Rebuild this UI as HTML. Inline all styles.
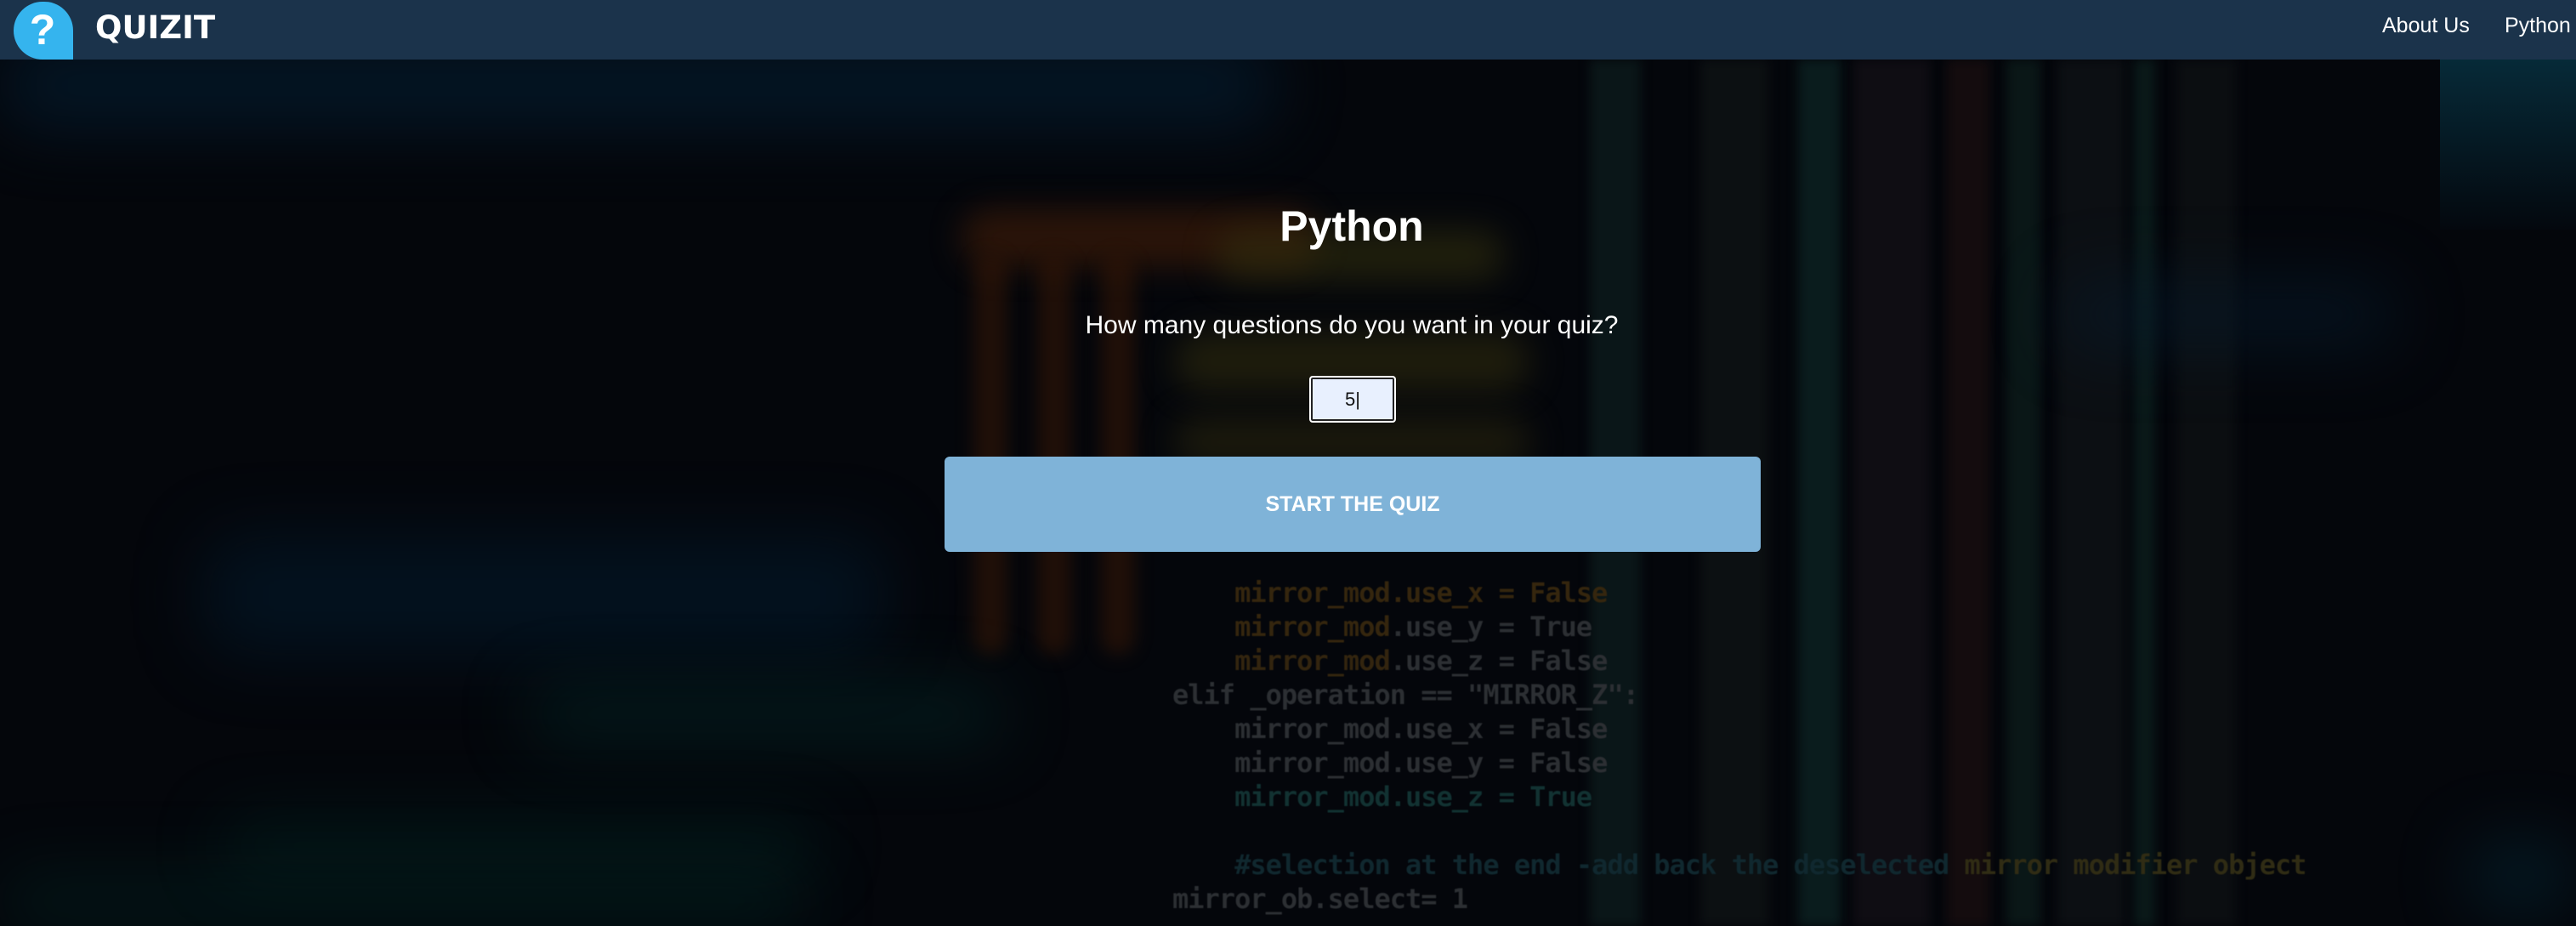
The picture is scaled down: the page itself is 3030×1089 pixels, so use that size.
<!DOCTYPE html>
<html><head><meta charset="utf-8"><style>
*{margin:0;padding:0;box-sizing:border-box}
html,body{width:3030px;height:1089px;overflow:hidden;background:#03050a;font-family:"Liberation Sans",Arial,sans-serif}
.bg{position:absolute;left:0;top:70px;width:3030px;height:1019px;overflow:hidden;background:#04060b}
.b{position:absolute;filter:blur(40px);border-radius:40px}
.s{position:absolute;top:0;height:1019px;filter:blur(6px)}
nav{position:absolute;left:0;top:0;width:3030px;height:70px;background:#1b334b;z-index:5}
.logo{position:absolute;left:14px;top:0}
.brand{position:absolute;left:112px;top:11px;color:#fff;font-weight:bold;font-size:37px;letter-spacing:0;font-family:"DejaVu Sans","Liberation Sans",sans-serif}
.nl{position:absolute;top:16px;color:#fff;font-size:25px}
.code{position:absolute;font-family:"DejaVu Sans Mono","Liberation Mono",monospace;font-size:32px;font-weight:bold;color:#2c2f33;white-space:pre;line-height:40px;letter-spacing:-1px;filter:blur(0.6px)}
h1{position:absolute;left:0;width:3180px;top:237px;text-align:center;color:#fff;font-size:50px;font-weight:bold}
.q{position:absolute;left:0;width:3180px;top:366px;text-align:center;color:#fff;font-size:30px}
.inp{position:absolute;left:1540px;top:442px;width:102px;height:55px;background:#e8f0fe;border:2px solid #fff;box-shadow:inset 0 0 0 2px #222;border-radius:4px;text-align:center;font-size:22px;line-height:51px;color:#111}
.btn{position:absolute;left:1111px;top:537px;width:960px;height:112px;background:#7fb3d8;border-radius:6px;color:#fff;font-weight:bold;font-size:25px;text-align:center;line-height:112px}
</style></head><body>
<div class="bg">
 <div class="b" style="left:0;top:-20px;width:1500px;height:100px;background:#042238;opacity:.6"></div>
 <div class="b" style="left:240px;top:560px;width:800px;height:140px;background:#031a2c;opacity:.6"></div>
 <div class="b" style="left:620px;top:740px;width:560px;height:60px;background:#032c2a;opacity:.6"></div>
 <div class="b" style="left:260px;top:900px;width:700px;height:50px;background:#02302a;opacity:.5"></div>
 <div class="b" style="left:0;top:960px;width:950px;height:60px;background:#022a26;opacity:.5"></div>
 <div class="b" style="left:1130px;top:175px;width:420px;height:70px;background:#3a1a08;opacity:.7;filter:blur(18px)"></div>
 <div class="b" style="left:1145px;top:230px;width:40px;height:470px;background:#331606;opacity:.6;filter:blur(10px)"></div>
 <div class="b" style="left:1220px;top:230px;width:40px;height:470px;background:#331606;opacity:.6;filter:blur(10px)"></div>
 <div class="b" style="left:1295px;top:230px;width:40px;height:470px;background:#331606;opacity:.6;filter:blur(10px)"></div>
 <div class="b" style="left:1430px;top:200px;width:340px;height:60px;background:#33300e;opacity:.6;filter:blur(20px)"></div>
 <div class="b" style="left:1380px;top:320px;width:420px;height:70px;background:#302c0e;opacity:.6;filter:blur(20px)"></div>
 <div class="b" style="left:1380px;top:420px;width:420px;height:60px;background:#2a260e;opacity:.6;filter:blur(20px)"></div>
 <div class="s" style="left:1870px;width:60px;background:#0a1618"></div>
 <div class="s" style="left:2000px;width:80px;background:#0c1012"></div>
 <div class="s" style="left:2115px;width:50px;background:#0a1c1d"></div>
 <div class="s" style="left:2180px;width:90px;background:#0f0d13"></div>
 <div class="s" style="left:2290px;width:50px;background:#140c0e"></div>
 <div class="s" style="left:2360px;width:40px;background:#0a1717"></div>
 <div class="s" style="left:2420px;width:80px;background:#0c0f13"></div>
 <div class="s" style="left:2510px;width:25px;background:#0a1919"></div>
 <div class="s" style="left:2560px;width:70px;background:#0b0e11"></div>
 <div class="b" style="left:2420px;top:260px;width:400px;height:80px;background:#071b2c;opacity:.6"></div>
 <div class="s" style="left:2870px;width:160px;height:200px;background:linear-gradient(#062a38,#04080e);filter:none"></div>
 <div class="b" style="left:2900px;top:920px;width:130px;height:80px;background:#063040;opacity:.5"></div>
 <div class="code" style="left:1379px;top:607px">    <span style="color:#35260e">mirror_mod.use_x = False</span>
    <span style="color:#35260e">mirror_mod</span>.use_y = True
    <span style="color:#33250f">mirror_mod</span>.use_z = False
elif _operation == "MIRROR_Z":
    mirror_mod.use_x = False
    mirror_mod.use_y = False
    <span style="color:#123232">mirror_mod.use_z = True</span>

    <span style="color:#10282f">#selection at the end -add back the deselected</span> <span style="color:#302c14">mirror modifier object</span>
mirror_ob.select= 1</div>
</div>
<nav>
 <svg class="logo" width="76" height="70" viewBox="0 0 76 70"><path d="M36 2a34 34 0 1 0 0 68h36V36A34 34 0 0 0 36 2z" fill="#35b4ee"/><text x="36" y="52" text-anchor="middle" font-family="Liberation Sans,sans-serif" font-weight="bold" font-size="50" fill="#fff">?</text></svg>
 <div class="brand">QUIZIT</div>
 <div class="nl" style="left:2802px">About Us</div>
 <div class="nl" style="left:2946px">Python</div>
</nav>
<h1>Python</h1>
<div class="q">How many questions do you want in your quiz?</div>
<div class="inp">5|</div>
<div class="btn">START THE QUIZ</div>
</body></html>
